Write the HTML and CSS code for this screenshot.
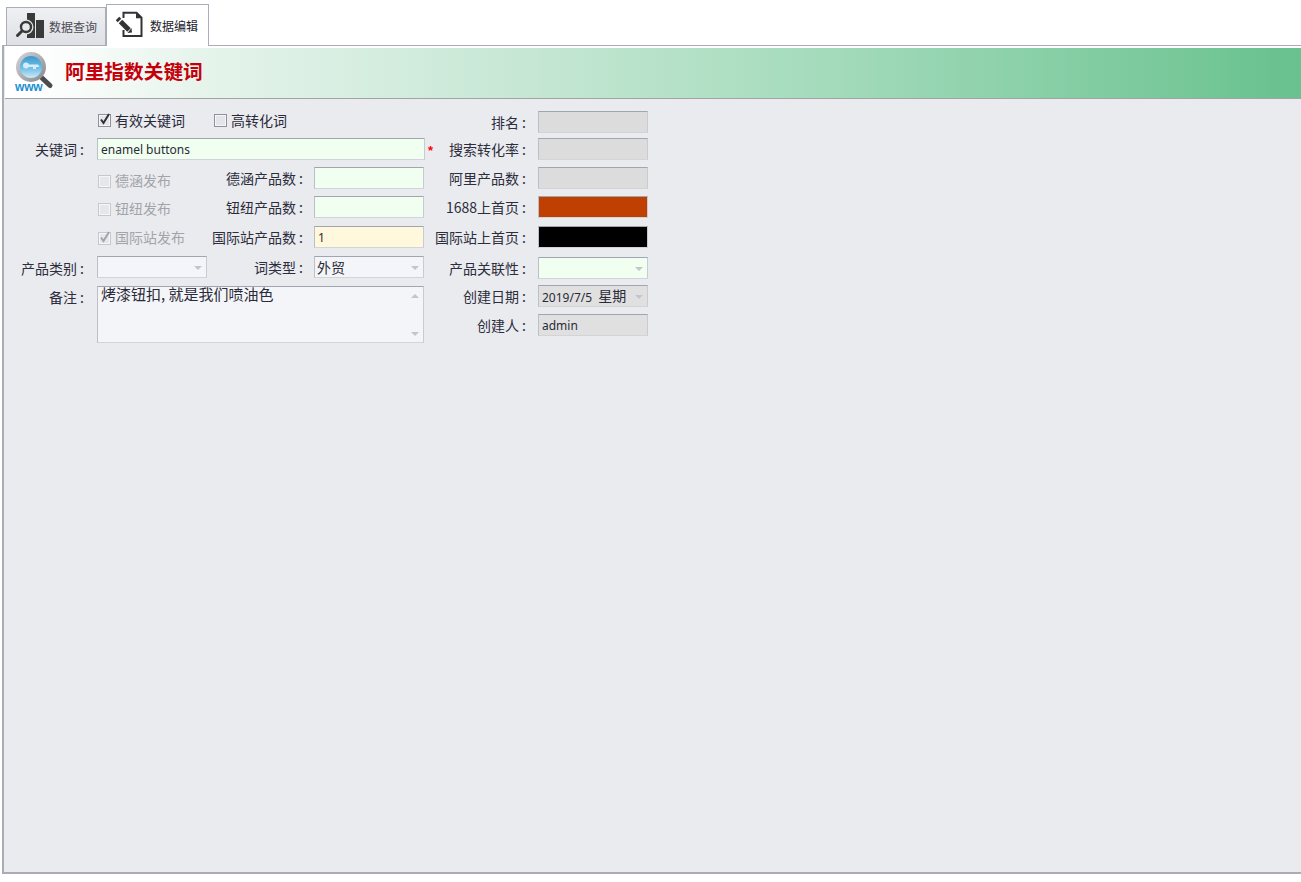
FILE: index.html
```html
<!DOCTYPE html>
<html lang="zh-CN">
<head>
<meta charset="utf-8">
<title>阿里指数关键词</title>
<link rel="stylesheet" href="styles.css">
</head>
<body>
<nav class="tabs">
  <div class="tab">
    <svg class="tab-icon" width="30" height="30" viewBox="0 0 30 30"><rect x="12" y="2" width="8" height="25" fill="#3a3a3a"/><rect x="21" y="9" width="8" height="18" fill="#3a3a3a"/><circle cx="11" cy="16" r="7.500" fill="#e6e7eb"/><circle cx="11" cy="16" r="5" fill="#e9eaee" stroke="#3a3a3a" stroke-width="2.400"/><path d="M7 20 2.500 24.500" stroke="#3a3a3a" stroke-width="3" stroke-linecap="round"/></svg>
    <span>数据查询</span>
  </div>
  <div class="tab active">
    <svg class="tab-icon" width="30" height="30" viewBox="0 0 30 30"><path d="M9.500 9V3.700H22.500L27.500 8.700V27H9.500V21" fill="none" stroke="#333" stroke-width="2"/><path d="M22 3.700V9.200H27.500Z" fill="#333"/><path d="M3.500 9.500 5.500 11.500" stroke="#333" stroke-width="5"/><path d="M6.500 12.500 15 21" stroke="#333" stroke-width="5"/><path d="M13.500 24 18 23.500 17.500 19Z" fill="#333"/></svg>
    <span>数据编辑</span>
  </div>
</nav>
<main class="panel">
  <header class="banner">
    <div class="logo">
      <svg width="40" height="40" viewBox="0 0 40 40">
        <defs>
          <linearGradient id="lens" x1="0" y1="0" x2="0" y2="1"><stop offset="0" stop-color="#3f97c9"/><stop offset=".55" stop-color="#6fc0e8"/><stop offset="1" stop-color="#cfe9f5"/></linearGradient>
          <linearGradient id="ring" x1="0" y1="0" x2="1" y2="1"><stop offset="0" stop-color="#d4d6da"/><stop offset="1" stop-color="#85898d"/></linearGradient>
        </defs>
        <path d="M26 26 34 33.500" stroke="#4a4c4e" stroke-width="5" stroke-linecap="round"/>
        <circle cx="15" cy="15" r="15" fill="url(#ring)"/>
        <circle cx="15" cy="15" r="11" fill="url(#lens)"/>
        <circle cx="10" cy="13.500" r="3" fill="#d6ecf6"/>
        <path d="M11 12.500H22L23.500 15H20V17H17V15H11Z" fill="#d6ecf6"/>
      </svg>
      <span class="www">www</span>
    </div>
    <h1 class="title">阿里指数关键词</h1>
  </header>
  <form class="form">
    <div class="left">
      <div class="checks first-checks">
        <label class="check"><span class="box"><svg width="13" height="13" viewBox="0 0 13 13"><path d="M3 6.500 5.500 10 11 1" fill="none" stroke="#2e2e3a" stroke-width="2"/></svg></span>有效关键词</label>
        <label class="check"><span class="box"></span>高转化词</label>
      </div>

      <div class="label">关键词<i>:</i></div>
      <div class="field green wide">enamel buttons</div>
      <div class="star">*</div>

      <div class="check-cell pad-3"><label class="check off"><span class="box"></span>德涵发布</label></div>
      <div class="label lab-c">德涵产品数<i>:</i></div>
      <div class="field green"></div>

      <div class="check-cell pad-2"><label class="check off"><span class="box"></span>钮纽发布</label></div>
      <div class="label lab-c">钮纽产品数<i>:</i></div>
      <div class="field green"></div>

      <div class="check-cell pad-1"><label class="check off"><span class="box"><svg width="13" height="13" viewBox="0 0 13 13"><path d="M3 6.500 5.500 10 11 1" fill="none" stroke="#a3a4a9" stroke-width="2"/></svg></span>国际站发布</label></div>
      <div class="label lab-c">国际站产品数<i>:</i></div>
      <div class="field yellow">1</div>

      <div class="label cat">产品类别<i>:</i></div>
      <div class="field combo light"><span class="arrow"></span></div>
      <div class="label lab-c">词类型<i>:</i></div>
      <div class="field combo light cjk">外贸<span class="arrow"></span></div>

      <div class="label first-col">备注<i>:</i></div>
      <div class="memo">
        <span class="memo-text">烤漆钮扣, 就是我们喷油色</span>
        <span class="scroll"><span class="arrow up"></span><span class="arrow"></span></span>
      </div>
    </div>

    <div class="right">
      <div class="label r">排名<i>:</i></div><div class="field gray"></div>
      <div class="label r">搜索转化率<i>:</i></div><div class="field gray"></div>
      <div class="label r">阿里产品数<i>:</i></div><div class="field gray"></div>
      <div class="label r">1688上首页<i>:</i></div><div class="field orange"></div>
      <div class="label r">国际站上首页<i>:</i></div><div class="field black"></div>
      <div class="label r">产品关联性<i>:</i></div><div class="field combo green"><span class="arrow"></span></div>
      <div class="label r">创建日期<i>:</i></div><div class="field combo date">2019/7/5 <span class="zh">星期</span><span class="arrow"></span></div>
      <div class="label r">创建人<i>:</i></div><div class="field date">admin</div>
    </div>
  </form>
</main>
</body>
</html>
```
FILE: styles.css
```css
* { box-sizing: border-box; }
html, body { margin: 0; height: 100%; }
body {
  width: 1301px;
  height: 882px;
  overflow: hidden;
  background: #fff;
  color: #2a2a38;
  font-family: "Noto Sans CJK SC", sans-serif;
  font-size: 14px;
  display: flex;
  flex-direction: column;
}
.tabs {
  height: 45px;
  padding: 4px 0 0 6px;
  display: flex;
  align-items: flex-end;
  flex: none;
}
.tab {
  width: 100px;
  height: 38px;
  display: flex;
  align-items: flex-start;
  border: 1px solid #abadb9;
  border-bottom: 0;
  background: linear-gradient(#eff0f3, #dfe0e5);
  color: #4b4b55;
  font-size: 12px;
  padding: 3px 0 0 8px;
  gap: 4px;
}
.tab span { line-height: 32px; }
.tab .tab-icon { flex: none; }
.tab.active {
  width: 103px;
  height: 42px;
  background: #fff;
  color: #22222e;
  padding: 4px 0 0 7px;
  gap: 6px;
  position: relative;
  z-index: 1;
  margin-bottom: -1px;
}
.tab.active span { line-height: 34px; }
.panel {
  flex: none;
  margin-left: 2px;
  height: 829px;
  background: #e9ebef;
  border: 2px solid #a9abb6;
  border-top-width: 1px;
  border-right: 0;
  display: flex;
  flex-direction: column;
}
.banner {
  flex: none;
  height: 53px;
  margin-left: 1px;
  border-top: 2px solid #fff;
  border-bottom: 1px solid #a3a3a6;
  background: linear-gradient(90deg, #fff 2%, #e6f4ec 15%, #c6e7d4 40%, #a6dcbd 62%, #68c18e 100%);
  background-clip: padding-box;
  display: flex;
  align-items: center;
}
.logo {
  position: relative;
  align-self: flex-start;
  width: 60px;
  height: 40px;
  flex: none;
  padding: 4px 0 0 11px;
}
.www {
  position: absolute;
  left: 10px;
  top: 33px;
  color: #1a8fd2;
  font: 700 12px/12px "Liberation Sans", sans-serif;
  letter-spacing: -0.2px;
}
.title {
  margin: 0 0 2px;
  color: #c5000b;
  font: 700 19.700px/24px "Liberation Serif", "Noto Sans CJK SC", serif;
}
.form {
  padding-top: 12px;
  display: flex;
}
.left {
  display: grid;
  width: 430px;
  grid-template-columns: 93px 110px 107px 110px 1px 9px;
  grid-template-rows: 27px 29px 29px 30px 30px 30px 57px;
}
.right {
  display: grid;
  grid-template-columns: 104px 110px;
  grid-template-rows: 27px 29px 29px 30px 31px 28px 29px 22px;
}
.label {
  height: 22px;
  line-height: 22px;
  text-align: right;
  padding-right: 13px;
  white-space: nowrap;
  color: #2d2d3c;
}
.label i { font-style: normal; margin-left: 3px; }
.label.r { padding-right: 12px; }
.label.lab-c { padding-right: 11px; }
.label.cat { line-height: 24px; grid-column: 1; }
.label.first-col { grid-column: 1; }
.field {
  width: 110px;
  height: 22px;
  border: 1px solid;
  border-color: #a2a4b0 #c9cbd2 #d2d4da #bcbec8;
  font: 12px/22px "Noto Sans", sans-serif;
  padding-left: 3px;
  white-space: nowrap;
  overflow: hidden;
  position: relative;
}
.wide { grid-column: 2 / span 4; width: 328px; }
.green { background: #f0fff0; }
.yellow { background: #fff8dc; }
.gray { background: #dcdcdc; }
.orange { background: #bf4000; }
.black { background: #000; }
.date { background: #e0e0e0; }
.light { background: #f4f5f8; }
.field.cjk { font: 14px/20px "Noto Sans CJK SC", sans-serif; padding-left: 2px; }
.zh { font: 14px/18px "Noto Sans CJK SC", sans-serif; margin-left: 3px; vertical-align: 1px; }
.star {
  grid-column: 6;
  color: #f00;
  font: 700 13px/25px "Liberation Sans", sans-serif;
  margin-left: 3px;
}
.first-checks { grid-column: 2 / span 5; display: flex; gap: 29px; margin-left: 1px; }
.check { display: inline-flex; align-items: center; gap: 4px; height: 18px; white-space: nowrap; }
.check-cell { padding-left: 1px; grid-column: 2; }
.pad-3 { padding-top: 4px; }
.pad-2 { padding-top: 3px; }
.pad-1 { padding-top: 2px; }
.off { color: #a3a4a9; }
.box {
  width: 13px;
  height: 13px;
  flex: none;
  border: 1px solid #8e909c;
  background: #e4e5ea;
  box-shadow: inset 0 0 0 1px #f6f6f8;
  position: relative;
  margin-top: 1px;
}
.box svg { position: absolute; left: -1px; top: -2px; }
.off .box { border-color: #c6c8cf; background: #e6e7eb; margin-top: 2px; }
.arrow {
  position: absolute;
  right: 4px;
  top: 9px;
  width: 0;
  height: 0;
  border-left: 4px solid transparent;
  border-right: 4px solid transparent;
  border-top: 4px solid #c3c5cc;
}
.memo {
  grid-column: 2 / span 3;
  width: 327px;
  height: 57px;
  background: #f4f5f8;
  border: 1px solid;
  border-color: #a2a4b0 #c9cbd2 #d2d4da #bcbec8;
  position: relative;
  padding: 0 0 0 3px;
  font-size: 15px;
  line-height: 14px;
}
.memo .scroll { position: absolute; inset: 0; }
.memo .arrow { right: 4px; top: auto; bottom: 6px; }
.memo .arrow.up { top: 7px; bottom: auto; border-top: 0; border-bottom: 4px solid #c3c5cc; }
```
